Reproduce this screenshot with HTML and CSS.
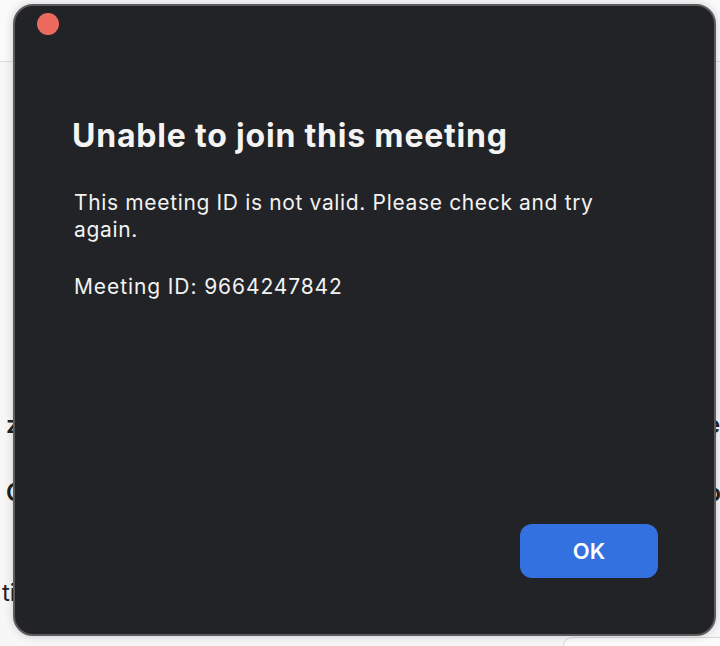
FILE: index.html
```html
<!DOCTYPE html>
<html>
<head>
<meta charset="utf-8">
<link rel="stylesheet" href="styles.css">
</head>
<body>
<div class="page">
  <div class="page-header"></div>
  <div class="page-row row-1"><span class="peek-left">z</span><span class="peek-right">e</span></div>
  <div class="page-row row-2"><span class="peek-left">C</span><span class="peek-right">p</span></div>
  <div class="page-row row-3"><span class="peek-left">ti</span><span class="peek-right link">r</span></div>
  <div class="page-footer-box"></div>
</div>

<div class="dialog">
  <div class="titlebar">
    <span class="close-dot"></span>
  </div>
  <div class="content">
    <h1 class="title">Unable to join this meeting</h1>
    <p class="message">This meeting ID is not valid. Please check and try again.</p>
    <p class="meeting-id">Meeting ID: 9664247842</p>
  </div>
  <div class="actions">
    <button class="ok-btn">OK</button>
  </div>
</div>
</body>
</html>
```

FILE: styles.css
```css
* { box-sizing: border-box; }
html, body {
  margin: 0;
  padding: 0;
  width: 720px;
  height: 646px;
  overflow: hidden;
  background: #f6f6f6;
  font-family: "Inter", "Noto Sans", sans-serif;
}

.page {
  position: relative;
  width: 720px;
  height: 646px;
  background: #f7f7f7;
  overflow: hidden;
}
.page-header {
  height: 62px;
  border-bottom: 1px solid #dcdcdc;
  background: #fafafa;
}
.page-row {
  position: absolute;
  left: 0;
  right: 0;
  font-size: 24px;
  font-weight: 600;
  color: #222;
}
.row-1 { top: 410px; }
.row-2 { top: 478px; }
.row-3 { top: 578px; font-weight: 400; }
.peek-left { position: absolute; left: 2px; }
.row-1 .peek-left { left: 6px; }
.row-2 .peek-left { left: 6px; }
.peek-right { position: absolute; left: 706px; }
.link { color: #1a5fd6; }
.page-footer-box {
  position: absolute;
  left: 563px;
  top: 637px;
  width: 157px;
  height: 9px;
  border: 1px solid #d6d6d6;
  border-right: none;
  border-bottom: none;
  border-radius: 10px 0 0 0;
  background: #fbfbfb;
}

.dialog {
  position: absolute;
  left: 13px;
  top: 4px;
  width: 703px;
  height: 632px;
  background: #222326;
  border: 2px solid #5c5c5e;
  border-radius: 20px;
  box-shadow: 0 0 10px rgba(0,0,0,0.18);
  display: flex;
  flex-direction: column;
}
.titlebar {
  height: 60px;
  padding: 7px 0 0 22px;
}
.close-dot {
  display: block;
  width: 22px;
  height: 22px;
  border-radius: 50%;
  background: #ed6a5e;
}
.content {
  flex: 1;
  padding: 0 0 0 57px;
  color: #f2f2f2;
}
.title {
  margin: 50px 0 0 0;
  font-size: 32px;
  font-weight: 700;
  line-height: 40px;
  letter-spacing: 0.8px;
  color: #f4f4f4;
}
.message {
  margin: 33px 0 0 2px;
  width: 560px;
  font-size: 21px;
  line-height: 27px;
  letter-spacing: 0.65px;
  color: #f2f2f2;
}
.meeting-id {
  margin: 30px 0 0 2px;
  font-size: 21px;
  line-height: 27px;
  letter-spacing: 0.9px;
  color: #f2f2f2;
}
.actions {
  display: flex;
  justify-content: flex-end;
  padding: 0 56px 56px 0;
}
.ok-btn {
  width: 138px;
  height: 54px;
  border: none;
  border-radius: 12px;
  background: #3371e1;
  color: #ffffff;
  font-family: "Inter", "Noto Sans", sans-serif;
  font-size: 22px;
  font-weight: 600;
}
```
